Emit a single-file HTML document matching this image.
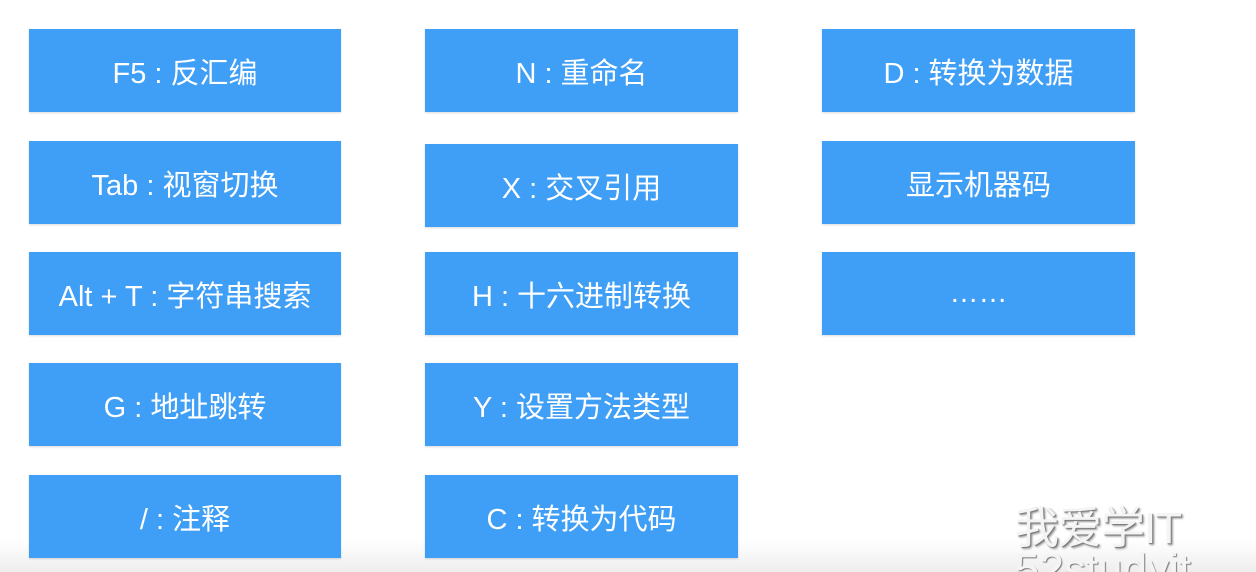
<!DOCTYPE html>
<html style="width:1256px;height:572px;overflow:hidden"><head><meta charset="utf-8"><style>
html,body{margin:0;padding:0;}
body{width:1256px;height:572px;background:#fff;position:relative;overflow:hidden;font-family:"Liberation Sans","Noto Sans CJK SC",sans-serif;}
.b{position:absolute;height:83px;background:#3f9ef5;color:#fff;font-size:29px;display:flex;align-items:center;justify-content:center;box-shadow:0 1px 2px rgba(0,0,0,.15);}
.c1{left:29px;width:312px}.c2{left:425px;width:313px}.c3{left:822px;width:313px}
.wm{position:absolute;left:1015px;top:492px;font-size:44px;color:#f4f4f4;text-shadow:1px 1px 1px #777,2px 2px 2px #999;letter-spacing:-1px;}
.wm2{position:absolute;left:1015px;top:545px;font-size:44px;color:#f4f4f4;text-shadow:1px 1px 1px #777;}
.grad{position:absolute;left:0;top:540px;width:1256px;height:32px;background:linear-gradient(#fff,#eee);}
</style></head><body>
<div class="grad"></div>
<div class="b c1" style="top:29px">F5 : 反汇编</div>
<div class="b c1" style="top:141px">Tab : 视窗切换</div>
<div class="b c1" style="top:252px">Alt + T : 字符串搜索</div>
<div class="b c1" style="top:363px">G : 地址跳转</div>
<div class="b c1" style="top:475px">/ : 注释</div>
<div class="b c2" style="top:29px">N : 重命名</div>
<div class="b c2" style="top:144px">X : 交叉引用</div>
<div class="b c2" style="top:252px">H : 十六进制转换</div>
<div class="b c2" style="top:363px">Y : 设置方法类型</div>
<div class="b c2" style="top:475px">C : 转换为代码</div>
<div class="b c3" style="top:29px">D : 转换为数据</div>
<div class="b c3" style="top:141px">显示机器码</div>
<div class="b c3" style="top:252px">……</div>
<div class="wm">我爱学IT</div>
<div class="wm2">52studyit</div>
</body></html>
